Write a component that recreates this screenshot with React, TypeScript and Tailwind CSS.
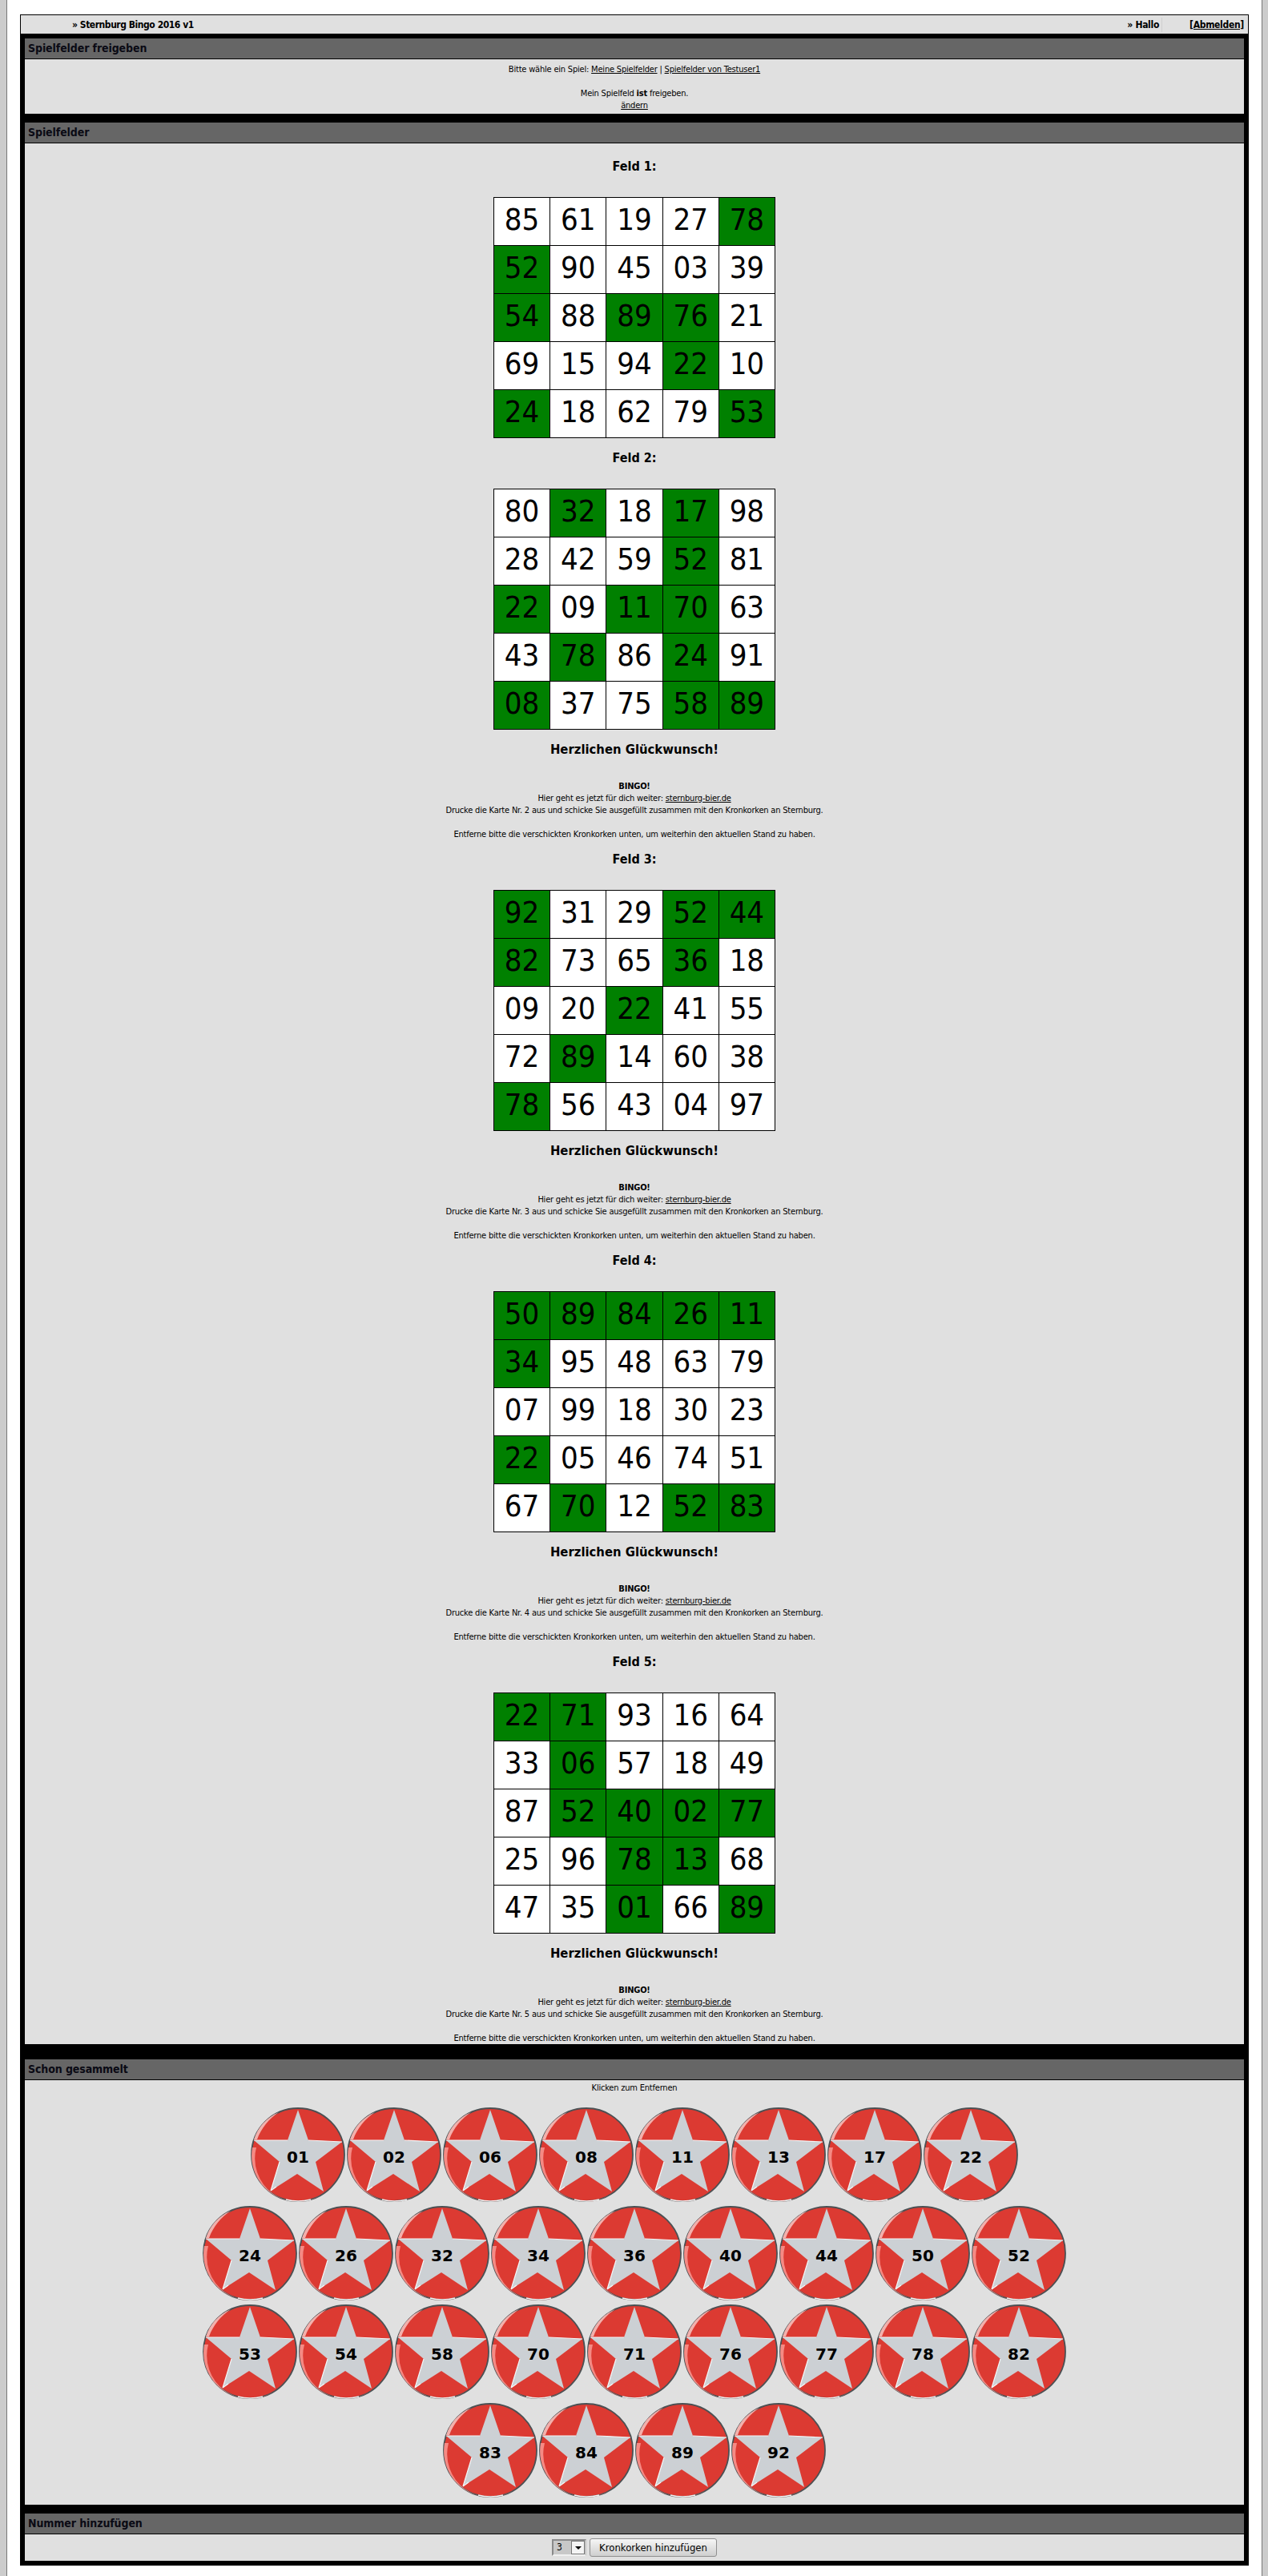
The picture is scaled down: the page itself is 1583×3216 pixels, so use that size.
import React from "react";

const boards: string[][][] = [
  [
    ["85", "61", "19", "27", "78"],
    ["52", "90", "45", "03", "39"],
    ["54", "88", "89", "76", "21"],
    ["69", "15", "94", "22", "10"],
    ["24", "18", "62", "79", "53"],
  ],
  [
    ["80", "32", "18", "17", "98"],
    ["28", "42", "59", "52", "81"],
    ["22", "09", "11", "70", "63"],
    ["43", "78", "86", "24", "91"],
    ["08", "37", "75", "58", "89"],
  ],
  [
    ["92", "31", "29", "52", "44"],
    ["82", "73", "65", "36", "18"],
    ["09", "20", "22", "41", "55"],
    ["72", "89", "14", "60", "38"],
    ["78", "56", "43", "04", "97"],
  ],
  [
    ["50", "89", "84", "26", "11"],
    ["34", "95", "48", "63", "79"],
    ["07", "99", "18", "30", "23"],
    ["22", "05", "46", "74", "51"],
    ["67", "70", "12", "52", "83"],
  ],
  [
    ["22", "71", "93", "16", "64"],
    ["33", "06", "57", "18", "49"],
    ["87", "52", "40", "02", "77"],
    ["25", "96", "78", "13", "68"],
    ["47", "35", "01", "66", "89"],
  ],
];

const capRows = [
  ["01", "02", "06", "08", "11", "13", "17", "22"],
  ["24", "26", "32", "34", "36", "40", "44", "50", "52"],
  ["53", "54", "58", "70", "71", "76", "77", "78", "82"],
  ["83", "84", "89", "92"],
];

const collected = capRows.flat();

function Section({ title, children }: { title: string; children: React.ReactNode }) {
  return (
    <section>
      <h2 className="h-[26px] border-b border-black bg-[#666666] pl-[4px] text-[14px] leading-[25px] font-bold tracking-[-0.1px] text-[#0a0a14]">
        {title}
      </h2>
      <div className="bg-[#e0e0e0]">{children}</div>
    </section>
  );
}

function Board({ index, rows }: { index: number; rows: string[][] }) {
  return (
    <div className="mb-[15px] text-center last:mb-[9px]">
      <h3 className="text-[16px] leading-[20px] font-bold">Feld {index}:</h3>
      <table className="mx-auto mt-[28px] w-[352px] table-fixed border-collapse bg-white text-[38px] leading-none">
        <tbody>
          {rows.map((row, r) => (
            <tr key={r}>
              {row.map((n, c) =>
                collected.includes(n) ? (
                  <td key={c} className="h-[60px] border border-black bg-[#008000] p-0 pb-[6px] text-center">
                    {n}
                  </td>
                ) : (
                  <td key={c} className="h-[60px] border border-black p-0 pb-[6px] text-center">
                    {n}
                  </td>
                ),
              )}
            </tr>
          ))}
        </tbody>
      </table>
      {index > 1 && (
        <div className="mb-[-1px]">
          <h3 className="mt-[15px] text-[16.5px] leading-[20px] font-bold">Herzlichen Glückwunsch!</h3>
          <div className="mt-[28px] text-[11px] leading-[15px] tracking-[-0.2px]">
            <p className="font-bold">BINGO!</p>
            <p>
              Hier geht es jetzt für dich weiter: <a className="underline">sternburg-bier.de</a>
            </p>
            <p>Drucke die Karte Nr. {index} aus und schicke Sie ausgefüllt zusammen mit den Kronkorken an Sternburg.</p>
            <p className="mt-[15px]">Entferne bitte die verschickten Kronkorken unten, um weiterhin den aktuellen Stand zu haben.</p>
          </div>
        </div>
      )}
    </div>
  );
}

function Cap({ n }: { n: string }) {
  return (
    <div className="relative h-[120px] w-[120px]">
      <svg viewBox="0 0 120 120" className="h-full w-full">
        <circle cx="60" cy="59" r="58" fill="#dc3a32" stroke="#4c5053" strokeWidth="1.8" />
        <path d="M3 50 A57.5 57.5 0 0 0 88 110 A54 54 0 0 1 8 50 Z" fill="#f58a84" />
        <path d="M5 40 C10 25 20 13 36 6 C24 14 14 26 9 40 Z" fill="#f3b0ac" />
        <path d="M45 115 C56 118 68 117 76 115" stroke="#f4f4f4" strokeWidth="1.5" fill="none" />
        <path
          d="M60 3 L73 41 L115 43 L82 68 L92 105 L59 83 L26 104 L37 68 L5 41 L47 41 Z"
          fill="#ccd0d4"
        />
        <path d="M5 41 L47 41 M73 41 L115 43 M26 104 L37 68 M26 104 L33 99" stroke="#f4f6f7" strokeWidth="1.2" fill="none" />
      </svg>
      <span className="absolute inset-x-0 top-[47px] text-center font-['DejaVu_Sans',sans-serif] text-[20px] leading-[30px] font-bold">
        {n}
      </span>
    </div>
  );
}

export default function App() {
  return (
    <div className="flex min-h-[3216px] bg-white font-['DejaVu_Sans_Condensed','Noto_Sans',sans-serif] text-black">
      <div className="w-[9px] shrink-0 border-r border-[#777777] bg-[#cccccc]" />
      <div className="w-[1566px] shrink-0 pt-[18px] pr-[16px] pl-[16px]">
        <div className="border border-black">
          <header className="flex h-[23px] items-center justify-between bg-[#e0e0e0] pr-[5px] pl-[64px] text-[12px] font-bold tracking-[-0.3px]">
            <span className="tracking-[-0.45px]">» Sternburg Bingo 2016 v1</span>
            <span className="flex">
              <span className="mr-[34px] border-r border-[#cfcfcf] pr-[3px]">» Hallo</span>
              <a className="underline">[Abmelden]</a>
            </span>
          </header>
          <div className="flex flex-col gap-[11px] bg-black px-[5px] pt-[6px] pb-[5px]">
            <Section title="Spielfelder freigeben">
              <div className="h-[68px] pt-[5px] text-center text-[11px] leading-[15px] tracking-[-0.2px]">
                <p>
                  Bitte wähle ein Spiel: <a className="underline">Meine Spielfelder</a> |{" "}
                  <a className="underline">Spielfelder von Testuser1</a>
                </p>
                <p className="mt-[15px]">
                  Mein Spielfeld <b>ist</b> freigeben.
                </p>
                <a className="underline">ändern</a>
              </div>
            </Section>
            <Section title="Spielfelder">
              <div className="pt-[19px]">
                {boards.map((rows, i) => (
                  <Board key={i} index={i + 1} rows={rows} />
                ))}
              </div>
            </Section>
            <Section title="Schon gesammelt">
              <div className="h-[530px] pt-[2px]">
                <p className="text-center text-[11px] leading-[15px] tracking-[-0.2px]">Klicken zum Entfernen</p>
                <div className="mt-[17px] flex flex-col gap-[3px]">
                  {capRows.map((row, i) => (
                    <div key={i} className="flex justify-center">
                      {row.map((n) => (
                        <Cap key={n} n={n} />
                      ))}
                    </div>
                  ))}
                </div>
              </div>
            </Section>
            <Section title="Nummer hinzufügen">
              <div className="flex h-[33px] items-start justify-center gap-[4px] pt-[5px] text-[12px]">
                <div className="mt-[1px] flex h-[21px] w-[43px] border-2 border-[#8a8a8a] border-r-[#c4c4c4] border-b-[#f0f0f0] bg-[#c8c8c8]">
                  <span className="flex-1 pl-[4px] leading-[17px]">3</span>
                  <span className="flex w-[17px] items-center justify-center border border-[#777777] bg-[#f4f4f4]">
                    <span className="h-0 w-0 border-x-[4px] border-t-[4px] border-x-transparent border-t-black" />
                  </span>
                </div>
                <button className="h-[23px] w-[159px] rounded-[3px] border border-[#8f8f8f] bg-gradient-to-b from-[#f6f6f6] to-[#cfcfcf] text-[13px]">
                  Kronkorken hinzufügen
                </button>
              </div>
            </Section>
          </div>
        </div>
      </div>
      <div className="flex-1 border-l border-[#777777] bg-[#cccccc]" />
    </div>
  );
}
